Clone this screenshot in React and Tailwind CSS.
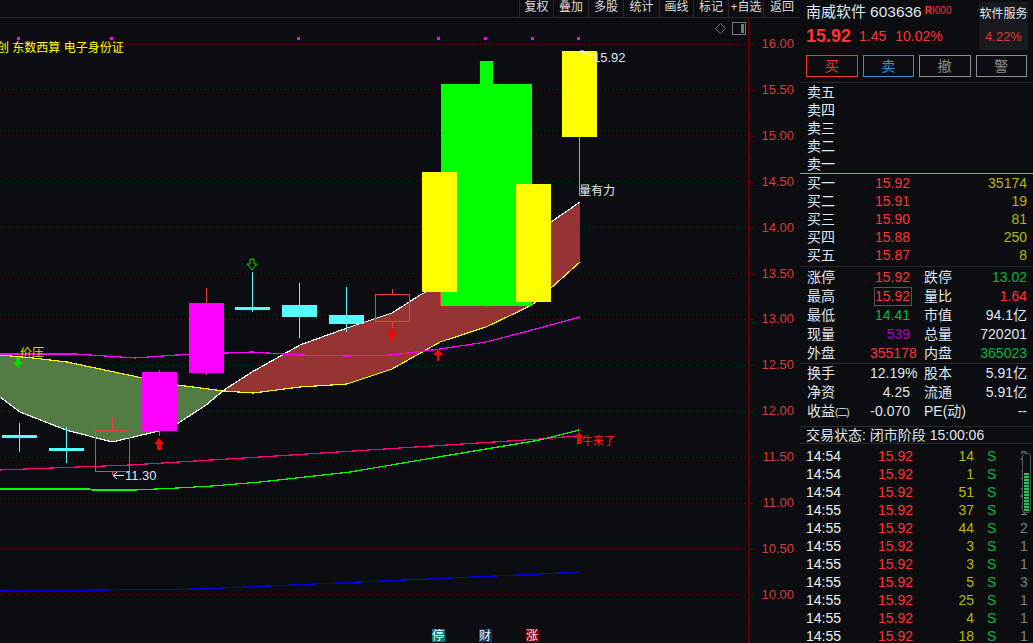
const FONT = "font-['Liberation_Sans','Noto_Sans_CJK_SC',sans-serif]";

const TOOLS = [
  ['复权', 'w-[34px]'],
  ['叠加', 'w-[35px]'],
  ['多股', 'w-[35px]'],
  ['统计', 'w-[36px]'],
  ['画线', 'w-[34px]'],
  ['标记', 'w-[35px]'],
  ['+自选', 'w-[35px]'],
  ['返回', 'w-[37px]'],
];

const AXIS = ['16.00', '15.50', '15.00', '14.50', '14.00', '13.50', '13.00', '12.50', '12.00', '11.50', '11.00', '10.50', '10.00'];
const axisY = (i) => 44 + i * 45.9;

const WHITE = [[0, 397], [20, 412], [66, 430], [112, 442], [159, 431], [177, 424], [206, 405], [224, 390], [252, 372], [300, 345], [347, 328], [392, 313], [420, 295], [440, 285], [486, 268], [532, 238], [551, 222], [580, 202]];
const YELLOW = [[0, 355], [33, 358], [67, 362], [133, 376], [177, 385], [224, 391], [253, 393], [300, 387], [347, 384], [392, 369], [440, 342], [486, 327], [532, 305], [580, 262]];

const pts = (list) => list.map((p) => p.join(',')).join(' ');

const GREEN_CLOUD = pts([...YELLOW.filter((p) => p[0] <= 224), ...WHITE.filter((p) => p[0] <= 224).reverse()]);
const RED_CLOUD = pts([...WHITE.filter((p) => p[0] >= 224), ...YELLOW.filter((p) => p[0] >= 224).reverse()]);

const upArrow = (x, y) => `${x},${y} ${x + 5},${y + 6} ${x + 2},${y + 6} ${x + 2},${y + 12} ${x - 2},${y + 12} ${x - 2},${y + 6} ${x - 5},${y + 6}`;
const downArrow = (x, y) => `${x},${y + 11} ${x + 5},${y + 5} ${x + 2},${y + 5} ${x + 2},${y} ${x - 2},${y} ${x - 2},${y + 5} ${x - 5},${y + 5}`;

const Chart = () => (
  <svg viewBox="0 18 800 625" className={`h-[625px] w-[800px] ${FONT}`}>
    {AXIS.map((t, i) => (
      <line key={t} x1="0" x2="748" y1={axisY(i)} y2={axisY(i)} stroke="#5e0c0c" strokeDasharray="1 3" shapeRendering="crispEdges" />
    ))}

    {/* cloud */}
    <polygon points={GREEN_CLOUD} fill="#537c44" />
    <polygon points={RED_CLOUD} fill="#963333" />
    <polyline points={pts(YELLOW)} fill="none" stroke="#ffff00" strokeWidth="1.2" shapeRendering="crispEdges" />
    <polyline points={pts(WHITE)} fill="none" stroke="#ffffff" strokeWidth="1.2" shapeRendering="crispEdges" />

    {/* averages */}
    <polyline points="0,354 75,354 135,358 177,355 252,352 300,355 347,356 392,355 440,349 486,342 532,330 580,317" fill="none" stroke="#ff00ff" strokeWidth="1.2" shapeRendering="crispEdges" />
    <polyline points="0,470 130,465 260,457 400,448 540,439 575,436" fill="none" stroke="#ff0080" strokeWidth="1.2" shapeRendering="crispEdges" />
    <polyline points="0,489 90,489 92,490 135,490 177,488 212,486 260,482 350,472 450,455 540,440 579,430" fill="none" stroke="#00ff00" strokeWidth="1.2" shapeRendering="crispEdges" />
    <polyline points="0,591 200,589 360,582 540,574 579,572" fill="none" stroke="#0000e0" strokeWidth="1.2" shapeRendering="crispEdges" />

    {/* candles */}
    <g shapeRendering="crispEdges">
      <rect x="19" y="423" width="1" height="29" fill="#55ffff" />
      <rect x="2" y="435" width="35" height="3" fill="#55ffff" />
      <rect x="66" y="427" width="1" height="36" fill="#55ffff" />
      <rect x="49" y="448" width="35" height="3" fill="#55ffff" />

      <rect x="112" y="417" width="1" height="13" fill="#f04040" />
      <rect x="112" y="471" width="1" height="4" fill="#f04040" />
      <rect x="95.5" y="430.5" width="34" height="41" fill="none" stroke="#f04040" />

      <rect x="159" y="370" width="1" height="66" fill="#f04040" />
      <rect x="142" y="372" width="35" height="59" fill="#ff00ff" />
      <rect x="206" y="288" width="1" height="87" fill="#f04040" />
      <rect x="189" y="303" width="35" height="70" fill="#ff00ff" />

      <rect x="252" y="272" width="1" height="40" fill="#55ffff" />
      <rect x="235" y="307" width="35" height="3" fill="#55ffff" />
      <rect x="299" y="283" width="1" height="55" fill="#55ffff" />
      <rect x="282" y="305" width="35" height="12" fill="#55ffff" />
      <rect x="346" y="287" width="1" height="45" fill="#55ffff" />
      <rect x="329" y="315" width="35" height="9" fill="#55ffff" />

      <rect x="392" y="289" width="1" height="5" fill="#f04040" />
      <rect x="392" y="321" width="1" height="7" fill="#f04040" />
      <rect x="375.5" y="294.5" width="34" height="27" fill="none" stroke="#f04040" />

      <rect x="440" y="292" width="1" height="13" fill="#f04040" />
      <rect x="480" y="61" width="13" height="24" fill="#00ff00" />
      <rect x="441" y="84" width="91" height="222" fill="#00ff00" />
      <rect x="486" y="306" width="1" height="1" fill="#00ff00" />
      <rect x="422" y="172" width="35" height="120" fill="#ffff00" />
      <rect x="516" y="184" width="35" height="118" fill="#ffff00" />
      <rect x="579" y="137" width="1" height="58" fill="#a0a0a0" />
      <rect x="562" y="51" width="35" height="86" fill="#ffff00" />
    </g>

    {/* markers */}
    <polygon points={upArrow(159, 438)} fill="#ff0000" />
    <polygon points={upArrow(392, 329)} fill="#ff0000" />
    <polygon points="438,349 443,355 439,355 439,361 437,361 437,355 433,355" fill="#ff0000" />
    <polygon points={upArrow(579, 432)} fill="#ff0000" />
    <polygon points={downArrow(18, 357)} fill="#00dd00" />
    <polygon points={downArrow(252, 259)} fill="none" stroke="#00dd00" />

    {[18, 111, 298, 438, 485, 532, 578].map((x) => (
      <rect key={x} x={x - 1} y="37" width="3" height="3" fill="#ff00ff" shapeRendering="crispEdges" />
    ))}

    {/* labels */}
    <text x="-3" y="52" fontSize="12" fill="#ffff00">创 东数西算 电子身份证</text>
    <text x="20" y="357" fontSize="12" fill="#d8d800">价压</text>
    <path d="M124 475.5H113M117 472l-4 3.5 4 3.5" fill="none" stroke="#ffffff" />
    <text x="125" y="480" fontSize="13" fill="#dde6ee">11.30</text>
    <path d="M580 51l11 5M580 51l4 0M580 51l1 3" fill="none" stroke="#ffffff" />
    <text x="593" y="62" fontSize="13" fill="#dde6ee">15.92</text>
    <text x="579" y="195" fontSize="12" fill="#e8e8e8">量有力</text>
    <text x="582" y="445" fontSize="11" fill="#ff2020">牛来了</text>

    {/* bottom badges */}
    <rect x="432" y="629" width="13" height="13" fill="#007a7a" />
    <text x="432" y="640" fontSize="12" fill="#e8ffff">停</text>
    <rect x="479" y="629" width="13" height="13" fill="#0a3a66" />
    <text x="479" y="640" fontSize="12" fill="#e8f4ff">财</text>
    <rect x="526" y="629" width="13" height="13" fill="#7a0000" />
    <text x="526" y="640" fontSize="12" fill="#ffe8e8">涨</text>

    {/* price axis */}
    <rect x="748" y="18" width="1" height="625" fill="#620000" shapeRendering="crispEdges" />
    {AXIS.map((t, i) => (
      <g key={t}>
        <rect x="749" y={axisY(i)} width="5" height="1" fill="#620000" shapeRendering="crispEdges" />
        <rect x="749" y={axisY(i) + 23} width="3" height="1" fill="#620000" shapeRendering="crispEdges" />
        <text x="794" y={axisY(i) + 4} fontSize="13" textAnchor="end" fill="#d83c3c">{t}</text>
      </g>
    ))}
    <path d="M720.5 23.5l5 5-5 5-5-5z" fill="none" stroke="#777777" />
    <rect x="732.5" y="22.5" width="13" height="12" fill="none" stroke="#777777" shapeRendering="crispEdges" />
    <rect x="741" y="24" width="3" height="9" fill="#777777" shapeRendering="crispEdges" />
  </svg>
);

const SELL = ['卖五', '卖四', '卖三', '卖二', '卖一'];
const BUY = [
  ['买一', '15.92', '35174'],
  ['买二', '15.91', '19'],
  ['买三', '15.90', '81'],
  ['买四', '15.88', '250'],
  ['买五', '15.87', '8'],
];

const RED = 'text-[#ff3333]';
const GREEN = 'text-[#00b83c]';
const LIGHT = 'text-[#dfe6ee]';

const STATS = [
  ['涨停', '15.92', RED, '跌停', '13.02', GREEN],
  ['最高', '15.92', RED, '量比', '1.64', RED],
  ['最低', '14.41', GREEN, '市值', '94.1亿', LIGHT],
  ['现量', '539', 'text-[#b000c8]', '总量', '720201', LIGHT],
  ['外盘', '355178', RED, '内盘', '365023', GREEN],
];

const FINANCE = [
  ['换手', '12.19%', '股本', '5.91亿'],
  ['净资', '4.25', '流通', '5.91亿'],
  ['收益', '-0.070', 'PE(动)', '--'],
];

const TICKS = [
  ['14:54', '14', '3'],
  ['14:54', '1', '1'],
  ['14:54', '51', '2'],
  ['14:55', '37', '1'],
  ['14:55', '44', '2'],
  ['14:55', '3', '1'],
  ['14:55', '3', '1'],
  ['14:55', '5', '3'],
  ['14:55', '25', '1'],
  ['14:55', '4', '1'],
  ['14:55', '18', '1'],
];

const StatRow = ({ row, boxed }) => (
  <div className="flex h-[19px] items-center pl-[7px] pr-[6px] leading-[19px]">
    <span className={`w-[28px] ${LIGHT}`}>{row[0]}</span>
    {boxed ? (
      <span className={`ml-[39px] mr-[12px] h-[19px] w-[38px] border border-[#555555] pr-[1px] text-right leading-[17px] ${row[2]}`}>{row[1]}</span>
    ) : (
      <span className={`ml-[35px] mr-[14px] w-[40px] text-right ${row[2]}`}>{row[1]}</span>
    )}
    <span className={`w-[28px] ${LIGHT}`}>{row[3]}</span>
    <span className={`flex-1 text-right ${row[5]}`}>{row[4]}</span>
  </div>
);

const Quote = () => (
  <div className={`relative h-[643px] w-[233px] overflow-hidden text-[14px] ${FONT}`}>
    <div className="flex h-[55px] pl-[6px] pr-[5px] pt-[2px]">
      <div className="flex-1">
        <div className={`flex h-[20px] items-center whitespace-nowrap ${LIGHT}`}>
          <span className="text-[15px]">南威软件</span>
          <span className="ml-[4px] text-[15.5px]">603636</span>
          <span className={`-mt-[3px] ml-[3px] text-[10px] ${RED}`}><b>R</b>I000</span>
        </div>
        <div className={`mt-[4px] flex h-[20px] items-center ${RED}`}>
          <span className="text-[18px] font-bold">15.92</span>
          <span className="ml-[8px]">1.45</span>
          <span className="ml-[9px]">10.02%</span>
        </div>
      </div>
      <div className="flex h-[48px] w-[49px] flex-col items-center bg-[#1a1a1e]">
        <span className={`mt-[4px] text-[12px] leading-[16px] ${LIGHT}`}>软件服务</span>
        <span className="mt-[7px] text-[13px] leading-[16px] text-[#d83c3c]">4.22%</span>
      </div>
    </div>

    <div className="flex h-[22px] gap-[5px] px-[6px]">
      <button className={`w-[52px] border border-[#ff3333] ${RED}`}>买</button>
      <button className="w-[52px] border border-[#3a8fdc] text-[#3a8fdc]">卖</button>
      <button className="w-[52px] border border-[#8c8c8c] text-[#8c8c8c]">撤</button>
      <button className="w-[52px] border border-[#8c8c8c] text-[#8c8c8c]">警</button>
    </div>

    <div className="mt-[5px] border-t border-[#2a2a2c]">
      {SELL.map((s) => (
        <div key={s} className={`h-[18px] pl-[7px] leading-[18px] ${LIGHT}`}>{s}</div>
      ))}
    </div>

    <div className="border-t border-[#c8963c] pb-[2px]">
      {BUY.map(([label, price, vol]) => (
        <div key={label} className="flex h-[18px] pl-[7px] pr-[6px] leading-[18px]">
          <span className={`w-[28px] ${LIGHT}`}>{label}</span>
          <span className={`ml-[35px] w-[40px] text-right ${RED}`}>{price}</span>
          <span className="flex-1 text-right text-[#b8b800]">{vol}</span>
        </div>
      ))}
    </div>

    <div className="border-t border-[#2a2a2c] pt-[1px]">
      {STATS.map((row, i) => (
        <StatRow key={row[0]} row={row} boxed={i === 1} />
      ))}
    </div>

    <div className="border-t border-[#2a2a2c]">
      {FINANCE.map((row) => (
        <div key={row[0]} className={`flex h-[19px] pl-[7px] pr-[6px] leading-[19px] ${LIGHT}`}>
          <span className="w-[50px] whitespace-nowrap">
            {row[0]}
            {row[0] === '收益' && <span className="text-[10px] tracking-[-1px]">(二)</span>}
          </span>
          <span className="ml-[13px] w-[40px] text-right">{row[1]}</span>
          <span className="ml-[14px] w-[50px] whitespace-nowrap">{row[2]}</span>
          <span className="flex-1 text-right">{row[3]}</span>
        </div>
      ))}
    </div>

    <div className={`mt-[5px] flex h-[18px] items-center border-y border-[#2a2a2c] pl-[6px] whitespace-nowrap ${LIGHT}`}>
      交易状态: 闭市阶段 15:00:06
    </div>

    <div className="pt-[3px]">
      {TICKS.map(([time, vol, count], i) => (
        <div key={i} className="flex h-[18px] pl-[6px] leading-[18px]">
          <span className="w-[36px] text-[#f0f0f0]">{time}</span>
          <span className={`ml-[36px] w-[35px] text-right ${RED}`}>15.92</span>
          <span className="w-[61px] text-right text-[#b8b800]">{vol}</span>
          <span className={`ml-[13px] w-[8px] ${GREEN}`}>S</span>
          <span className="ml-[25px] text-[#7a8088]">{count}</span>
        </div>
      ))}
    </div>

    {/* scrollbar lying over the tick list */}
    <div className="absolute left-[222px] top-[453px] flex h-[60px] w-[9px] flex-col justify-end rounded-[3px] border border-[#555555] bg-[#0c0d10] p-[1px]">
      <div className="h-[38px] bg-[repeating-linear-gradient(to_bottom,#2fbf5f_0,#2fbf5f_2px,#14401f_2px,#14401f_3px)]" />
    </div>
  </div>
);

export default function App() {
  return (
    <div className={`flex h-[643px] w-[1033px] overflow-hidden bg-[#0c0d10] ${FONT}`}>
      <div className="flex w-[800px] flex-col">
        <div className="flex h-[18px] justify-end border-b border-[#2a2a2c]">
          {TOOLS.map(([label, width]) => (
            <div key={label} className={`${width} border-l border-[#2a2a2c] text-center text-[12px] leading-[15px] whitespace-nowrap text-[#dddddd]`}>
              {label}
            </div>
          ))}
        </div>
        <Chart />
      </div>
      <Quote />
    </div>
  );
}
